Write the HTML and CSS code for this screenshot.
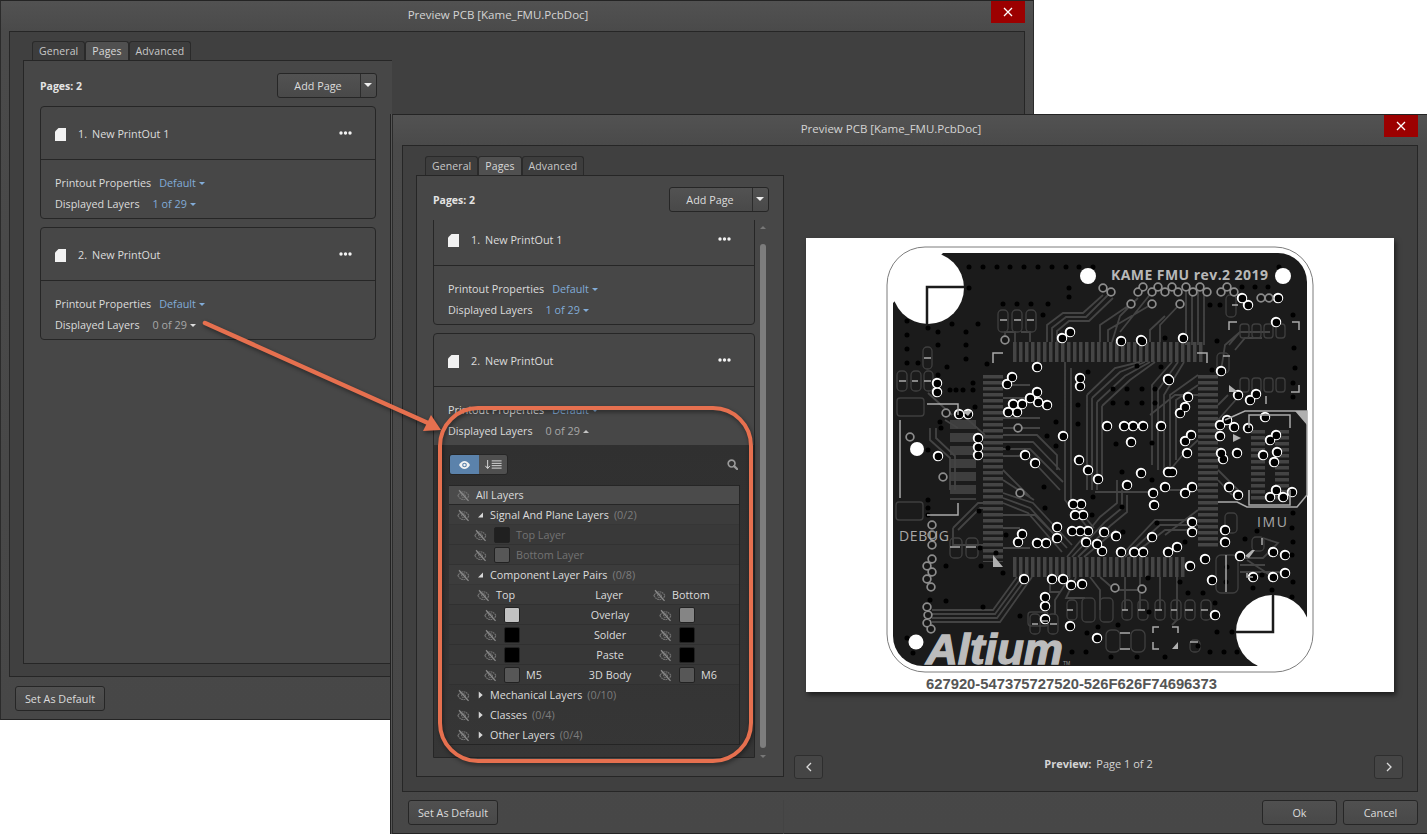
FILE: index.html
```html
<!DOCTYPE html>
<html lang="en">
<head>
<meta charset="utf-8">
<title>Preview PCB</title>
<link rel="stylesheet" href="styles.css">
</head>
<body>
<svg class="sprites" aria-hidden="true">
  <symbol id="eye-off" viewBox="0 0 14 14">
    <path class="i-line" d="M1 7.2C3 4 5 3 7 3s4 1 6 4.2C11 10.4 9 11.4 7 11.4S3 10.4 1 7.2Z"/>
    <circle class="i-line" cx="7" cy="7.2" r="2"/>
    <path class="i-slash" d="M2.2 1.4 12.4 12.8"/>
  </symbol>
  <symbol id="page" viewBox="0 0 11 13"><path class="i-white" d="M3.5 0H11V13H0V3.5Z"/></symbol>
  <symbol id="dots" viewBox="0 0 13 4"><circle class="i-white" cx="2" cy="2" r="1.7"/><circle class="i-white" cx="6.5" cy="2" r="1.7"/><circle class="i-white" cx="11" cy="2" r="1.7"/></symbol>
  <symbol id="tri-open" viewBox="0 0 7 7"><path class="i-soft" d="M6 1V6H1Z"/></symbol>
  <symbol id="tri-shut" viewBox="0 0 7 9"><path class="i-soft" d="M1.5 .5 6 4.5 1.5 8.5Z"/></symbol>
  <symbol id="x" viewBox="0 0 10 10"><path class="i-x" d="M1 1 9 9M9 1 1 9"/></symbol>
</svg>

<section class="window win-back">
  <header class="titlebar"><span>Preview PCB [Kame_FMU.PcbDoc]</span><button class="close"><svg class="ic-x"><use href="#x"/></svg></button></header>
  <div class="frame frame-back">
    <div class="left left-back">
      <nav class="tabs"><span class="tab">General</span><span class="tab on">Pages</span><span class="tab">Advanced</span></nav>
      <div class="panel panel-back">
        <div class="panel-head">
          <strong>Pages: 2</strong>
          <div class="split"><span class="split-main">Add Page</span><span class="split-caret"></span></div>
        </div>
        <div class="cards cards-back">
          <article class="card">
            <div class="card-head"><svg class="ic-page"><use href="#page"/></svg><span class="num">1.</span><span>New PrintOut 1</span><svg class="ic-dots"><use href="#dots"/></svg></div>
            <div class="card-body">
              <div class="prop"><span>Printout Properties</span><a class="val v1">Default<i class="car"></i></a></div>
              <div class="prop"><span>Displayed Layers</span><a class="val v2">1 of 29<i class="car"></i></a></div>
            </div>
          </article>
          <article class="card">
            <div class="card-head"><svg class="ic-page"><use href="#page"/></svg><span class="num">2.</span><span>New PrintOut</span><svg class="ic-dots"><use href="#dots"/></svg></div>
            <div class="card-body">
              <div class="prop"><span>Printout Properties</span><a class="val v1">Default<i class="car"></i></a></div>
              <div class="prop"><span>Displayed Layers</span><a class="val v2 grey">0 of 29<i class="car white"></i></a></div>
            </div>
          </article>
        </div>
      </div>
    </div>
  </div>
  <footer class="foot foot-back"><button class="btn btn-set">Set As Default</button></footer>
</section>

<section class="window win-front">
  <header class="titlebar"><span>Preview PCB [Kame_FMU.PcbDoc]</span><button class="close"><svg class="ic-x"><use href="#x"/></svg></button></header>
  <div class="frame">
    <div class="left">
      <nav class="tabs"><span class="tab">General</span><span class="tab on">Pages</span><span class="tab">Advanced</span></nav>
      <div class="panel">
        <div class="panel-head panel-head-front">
          <strong>Pages: 2</strong>
          <div class="split"><span class="split-main">Add Page</span><span class="split-caret"></span></div>
        </div>
        <div class="scroller">
          <div class="cards">
            <article class="card card-clipped">
              <div class="card-head"><svg class="ic-page"><use href="#page"/></svg><span class="num">1.</span><span>New PrintOut 1</span><svg class="ic-dots"><use href="#dots"/></svg></div>
              <div class="card-body">
                <div class="prop"><span>Printout Properties</span><a class="val v1">Default<i class="car"></i></a></div>
                <div class="prop"><span>Displayed Layers</span><a class="val v2">1 of 29<i class="car"></i></a></div>
              </div>
            </article>
            <article class="card card-open">
              <div class="card-head"><svg class="ic-page"><use href="#page"/></svg><span class="num">2.</span><span>New PrintOut</span><svg class="ic-dots"><use href="#dots"/></svg></div>
              <div class="card-body">
                <div class="prop"><span>Printout Properties</span><a class="val v1">Default<i class="car"></i></a></div>
                <div class="prop"><span>Displayed Layers</span><a class="val v2 grey">0 of 29<i class="car up"></i></a></div>
              </div>
              <div class="layers">
                <div class="toolbar">
                  <div class="seg">
                    <span class="seg-on"><svg class="ic-eye" viewBox="0 0 14 10"><path class="i-white" d="M0 5C2 1.7 4.5 0 7 0s5 1.7 7 5c-2 3.3-4.500 5-7 5S2 8.300 0 5Z"/><circle class="i-blue" cx="7" cy="5" r="3"/><circle class="i-white" cx="7" cy="5" r="1.500"/></svg></span>
                    <span class="seg-off"><svg class="ic-sort" viewBox="0 0 20 10"><path class="i-stroke" d="M3.500 0V9M1 6.500 3.500 9.500 6 6.500M8 1H19M8 3.700H19M8 6.300H19M8 9H19"/></svg></span>
                  </div>
                  <svg class="ic-search" viewBox="0 0 12 12"><circle class="i-search" cx="5" cy="5" r="3.700"/><path class="i-search-h" d="M7.800 7.800 11 11"/></svg>
                </div>
                <div class="tree">
                  <div class="row row-all"><svg class="eo"><use href="#eye-off"/></svg><span class="lab">All Layers</span></div>
                  <div class="row row-grp"><svg class="eo"><use href="#eye-off"/></svg><svg class="tri"><use href="#tri-open"/></svg><span class="lab">Signal And Plane Layers</span><span class="cnt">(0/2)</span></div>
                  <div class="row row-sub"><svg class="eo"><use href="#eye-off"/></svg><i class="sw sw-top"></i><span class="dim">Top Layer</span></div>
                  <div class="row row-sub"><svg class="eo"><use href="#eye-off"/></svg><i class="sw sw-mid"></i><span class="dim">Bottom Layer</span></div>
                  <div class="row row-grp"><svg class="eo"><use href="#eye-off"/></svg><svg class="tri"><use href="#tri-open"/></svg><span class="lab">Component Layer Pairs</span><span class="cnt">(0/8)</span></div>
                  <div class="pair pair-head">
                    <div class="side"><svg class="eo"><use href="#eye-off"/></svg><span class="lab">Top</span></div>
                    <div class="mid">Layer</div>
                    <div class="side"><svg class="eo"><use href="#eye-off"/></svg><span class="lab">Bottom</span></div>
                  </div>
                  <div class="pair">
                    <div class="side"><svg class="eo"><use href="#eye-off"/></svg><i class="sw sw-light"></i></div>
                    <div class="mid">Overlay</div>
                    <div class="side"><svg class="eo"><use href="#eye-off"/></svg><i class="sw sw-grey"></i></div>
                  </div>
                  <div class="pair">
                    <div class="side"><svg class="eo"><use href="#eye-off"/></svg><i class="sw sw-black"></i></div>
                    <div class="mid">Solder</div>
                    <div class="side"><svg class="eo"><use href="#eye-off"/></svg><i class="sw sw-black"></i></div>
                  </div>
                  <div class="pair">
                    <div class="side"><svg class="eo"><use href="#eye-off"/></svg><i class="sw sw-black"></i></div>
                    <div class="mid">Paste</div>
                    <div class="side"><svg class="eo"><use href="#eye-off"/></svg><i class="sw sw-black"></i></div>
                  </div>
                  <div class="pair">
                    <div class="side"><svg class="eo"><use href="#eye-off"/></svg><i class="sw sw-mid"></i><span class="lab">M5</span></div>
                    <div class="mid">3D Body</div>
                    <div class="side"><svg class="eo"><use href="#eye-off"/></svg><i class="sw sw-mid"></i><span class="lab">M6</span></div>
                  </div>
                  <div class="row row-end"><svg class="eo"><use href="#eye-off"/></svg><svg class="tri"><use href="#tri-shut"/></svg><span class="lab">Mechanical Layers</span><span class="cnt">(0/10)</span></div>
                  <div class="row row-end"><svg class="eo"><use href="#eye-off"/></svg><svg class="tri"><use href="#tri-shut"/></svg><span class="lab">Classes</span><span class="cnt">(0/4)</span></div>
                  <div class="row row-end"><svg class="eo"><use href="#eye-off"/></svg><svg class="tri"><use href="#tri-shut"/></svg><span class="lab">Other Layers</span><span class="cnt">(0/4)</span></div>
                </div>
              </div>
            </article>
          </div>
          <div class="scrollbar"><i class="sb-up"></i><i class="sb-thumb"></i><i class="sb-down"></i></div>
        </div>
      </div>
    </div>

    <div class="preview">
      <div class="paper">
        <svg class="pcb" viewBox="806 238 588 454">
          <defs>
            <path id="vias" d="M1070 332h0M1062 338h0M1121 341h0M1142 341h0M1037 367h0M1012 377h0M1007 384h0M1080 378h0M1080 386h0M1168 379h0M1037 392h0M1030 398h0M1038 402h0M1047 405h0M1013 404h0M1022 404h0M1008 412h0M1017 412h0M959 414h0M968 414h0M1063 436h0M1107 426h0M1124 426h0M1133 426h0M1143 426h0M1161 426h0M1131 442h0M938 456h0M978 438h0M978 447h0M978 455h0M937 383h0M937 392h0M1025 455h0M1035 463h0M1079 460h0M1088 470h0M1098 479h0M1141 473h0M1168 472h0M1127 485h0M1165 487h0M1153 493h0M1154 505h0M1073 504h0M1081 504h0M1075 515h0M1083 515h0M1057 527h0M1072 531h0M1080 531h0M1088 531h0M1104 532h0M1116 536h0M1152 537h0M1022 534h0M1018 542h0M1037 543h0M1046 543h0M1057 538h0M1086 542h0M1097 544h0M1102 551h0M1121 552h0M1134 552h0M1143 552h0M1168 552h0M1024 579h0M1052 579h0M1063 579h0M1071 585h0M1082 584h0M1045 597h0M1045 606h0M1045 619h0M1070 626h0M1097 638h0M1242 298h0M1248 305h0M1278 298h0M1141 340h0M1183 338h0M1276 322h0M1221 371h0M1169 380h0M1238 395h0M1250 400h0M1256 394h0M1188 397h0M1185 407h0M1180 413h0M1227 420h0M1220 425h0M1234 427h0M1220 436h0M1248 428h0M1265 417h0M1191 435h0M1185 441h0M1187 453h0M1276 435h0M1270 440h0M1277 452h0M1263 455h0M1221 453h0M1237 453h0M1223 459h0M1274 462h0M1172 472h0M1192 487h0M1185 493h0M1229 487h0M1238 495h0M1270 497h0M1283 497h0M1276 490h0M1292 492h0M1192 522h0M1192 532h0M1225 530h0M1225 542h0M1177 547h0M1190 566h0M1205 559h0M1212 580h0M1240 556h0M1273 552h0M1285 555h0M1285 573h0M1273 577h0M1253 577h0M1215 615h0"/>
            <path id="gvias" d="M1103 288h0M1111 292h0M1143 287h0M1138 292h0M1152 292h0M1158 287h0M1165 292h0M1131 304h0M1152 304h0M1180 304h0M1172 287h0M1178 292h0M1186 287h0M1193 292h0M1200 287h0M1207 292h0M1221 292h0M1227 287h0M1234 292h0M1261 298h0M1269 298h0M1005 340h0M946 413h0M1018 428h0M910 437h0M1020 493h0M943 477h0M1115 588h0M1142 589h0M932 525h0M932 535h0M932 545h0M932 559h0M927 566h0M932 572h0M927 579h0M931 587h0M927 607h0M928 615h0M927 623h0M931 629h0"/>
          </defs>

          <rect class="outline" x="887" y="247" width="426" height="425" rx="38"/>
          <path class="board" d="M943 253H1278A29 29 0 0 1 1307 282V620L1257 666H923A30 30 0 0 1 893 636V303Z"/>

          <g class="comb">
            <path d="M1013 352H1205"/>
            <path d="M993 375V562"/>
            <path d="M1208 375V548"/>
            <path d="M1013 567H1186"/>
          </g>
          <g class="comb-pad">
            <path d="M963 420V500"/>
          </g>
          <g class="comb-thin">
            <path d="M1258 430V500"/>
            <path d="M1282 430V500"/>
          </g>
          <g class="tr">
            <path d="M1005 340V332H1015V342M1047 342V325L1063 313H1083L1103 295M1052 342V328L1066 317H1086L1111 292M1057 342V331L1069 321H1089L1113 298M1100 342V325L1131 304M1108 342V330L1152 304M1112 342 1120 316 1138 298M1120 332 1152 292M1160 342V325L1180 304M1186 345V290M1192 345V290M1198 345V290M1204 345V295M1030 342V332H1021M1150 342V330L1165 316"/>
            <path d="M1065 362V500L1088 528M1071 368V500L1094 528M1087 395V490M1092 398V490M1097 402V490M1102 406V480M1087 395 1115 368 1140 362M1092 398 1120 372 1145 362M1097 402 1125 376 1150 362M1102 406 1130 380 1155 362M1172 362 1152 385V465M1178 362 1158 390V470M1184 362 1164 395V470"/>
            <path d="M1003 385H1030M1003 398H1035M1003 418H1040M1003 428H1040M1003 435H1037L1057 455V470M1003 442H1033L1060 470M1003 449H1030L1063 482M1003 456H1028L1060 490M1003 470 1030 497M1003 480 1034 500M1003 493 1033 503 1072 545M1003 498 1030 508 1067 548M1003 503 1028 513 1062 552M1000 515H1035L1055 535M1003 528H1020M1003 548H1030"/>
            <path d="M1067 557 1100 517 1117 503V480M1072 557 1105 522 1122 508V490M1078 557 1110 526 1127 512V495M1084 557 1116 530M1120 557 1155 520H1198M1125 557 1160 525H1198M1130 557 1165 530H1198M1198 395H1175L1150 415M1198 490H1160M1153 492H1095M1198 375 1170 395V470M1198 385 1176 400V460M1198 440 1185 452 1170 470M1198 510 1165 535"/>
            <path d="M1017 577 993 610H932M1022 577 995 614H932M1027 577 997 618H932M1032 577 1000 622H932M1050 577V592H1060M1090 577 1100 590V610M1100 577 1115 590H1140M1125 577V610M1140 577V610M1160 577V610M1177 577V620L1172 625M1070 577 1055 600V615M1076 577 1066 598H1085"/>
            <path d="M953 528 978 503H983M953 528V545H995M958 530 980 508H985M928 393 952 415M930 428V440L950 458V490M936 428V438L955 456V490M966 418 985 435M945 420 958 428"/>
            <path d="M1240 558H1263L1278 543 1263 538M1240 565H1265M1240 572H1285M1247 560 1270 575M1229 345 1240 332H1270M1235 350 1245 338H1262M1221 371 1225 345 1240 332M1218 420 1240 395M1218 405 1228 395M1218 470 1240 492M1218 480 1232 495"/>
          </g>
          <g class="pad">
            <rect x="998" y="310" width="10" height="22" rx="4"/><rect x="1012" y="310" width="10" height="22" rx="4"/><rect x="1026" y="310" width="10" height="22" rx="4"/>
            <rect x="923" y="347" width="9" height="22" rx="4"/>
            <rect x="897" y="371" width="10" height="20" rx="4"/><rect x="911" y="371" width="10" height="20" rx="4"/><rect x="924" y="371" width="9" height="20" rx="4"/>
            <rect x="897" y="398" width="27" height="18" rx="3"/>
            <rect x="896" y="502" width="27" height="18" rx="3"/>
            <rect x="950" y="538" width="12" height="20" rx="4"/><rect x="966" y="538" width="12" height="20" rx="4"/>
            <rect x="1030" y="614" width="10" height="20" rx="4"/><rect x="1048" y="614" width="10" height="20" rx="4"/><rect x="1028" y="612" width="20" height="14" rx="3"/>
            <rect x="1067" y="600" width="10" height="20" rx="4"/><rect x="1082" y="598" width="13" height="24" rx="4"/><rect x="1100" y="598" width="13" height="24" rx="4"/>
            <rect x="1122" y="600" width="10" height="20" rx="4"/><rect x="1138" y="600" width="10" height="20" rx="4"/><rect x="1155" y="600" width="10" height="20" rx="4"/><rect x="1171" y="600" width="10" height="20" rx="4"/><rect x="1185" y="600" width="10" height="20" rx="4"/><rect x="1201" y="600" width="10" height="20" rx="4"/>
            <rect x="1106" y="630" width="14" height="22" rx="5"/><rect x="1131" y="630" width="14" height="22" rx="5"/>
            <rect x="1190" y="640" width="10" height="12" rx="4"/>
            <rect x="1226" y="295" width="10" height="22" rx="4"/>
            <rect x="1240" y="324" width="9" height="14" rx="3"/><rect x="1252" y="324" width="9" height="14" rx="3"/><rect x="1264" y="324" width="9" height="14" rx="3"/><rect x="1276" y="324" width="9" height="14" rx="3"/>
            <rect x="1240" y="378" width="9" height="14" rx="3"/><rect x="1252" y="378" width="9" height="14" rx="3"/><rect x="1264" y="378" width="9" height="14" rx="3"/><rect x="1276" y="378" width="9" height="14" rx="3"/>
            <rect x="1217" y="353" width="12" height="20" rx="4"/>
            <rect x="1225" y="513" width="12" height="20" rx="4"/>
            <rect x="1252" y="537" width="12" height="14" rx="4"/>
            <rect x="1216" y="555" width="22" height="38" rx="5"/>
          </g>

          <use href="#vias" class="v-white"/>
          <use href="#vias" class="v-hole" transform="translate(.4 .4)"/>
          <use href="#gvias" class="v-grey"/>
          <use href="#gvias" class="v-hole-s"/>
          <path class="dots" d="M969 267h0M983 267h0M997 267h0M1010 267h0M1024 267h0M1038 267h0M1052 267h0M1066 267h0M1079 267h0M1093 267h0M969 288h0M1069 288h0M1069 297h0M1003 304h0M1017 304h0M1031 304h0M1048 304h0M1043 315h0M907 321h0M928 328h0M938 332h0M952 324h0M966 332h0M978 324h0M907 335h0M907 349h0M938 345h0M966 345h0M966 359h0M947 367h0M987 364h0M907 363h0M918 363h0M938 375h0M950 390h0M956 390h0M963 390h0M973 390h0M973 383h0M975 407h0M940 422h0M941 428h0M928 450h0M1056 422h0M1078 405h0M1078 424h0M1088 372h0M1137 366h0M1161 367h0M1113 389h0M1127 389h0M1142 389h0M1155 389h0M1113 403h0M1127 403h0M1142 403h0M1155 403h0M1116 444h0M1152 443h0M1047 436h0M1056 446h0M1008 448h0M928 500h0M928 508h0M928 515h0M979 511h0M1006 535h0M980 548h0M996 553h0M946 566h0M981 566h0M1003 573h0M930 600h0M946 601h0M983 607h0M1020 616h0M1044 487h0M1045 508h0M1093 497h0M1122 472h0M1122 507h0M1152 480h0M1157 523h0M1123 532h0M1092 515h0M913 653h0M907 638h0M1072 652h0M1086 652h0M1111 657h0M1137 657h0M1165 657h0M1087 633h0M1098 627h0M1118 625h0M1149 612h0M1293 315h0M1294 348h0M1295 368h0M1293 383h0M1293 397h0M1210 305h0M1220 305h0M1255 287h0M1268 287h0M1279 267h0M1242 287h0M1217 341h0M1212 370h0M1165 338h0M1293 513h0M1292 528h0M1293 542h0M1292 555h0M1293 582h0M1292 597h0M1272 590h0M1253 588h0M1217 632h0M1232 632h0M1210 652h0M1224 652h0M1237 652h0M1198 646h0M1215 603h0M1188 593h0M1203 593h0M1180 582h0M1148 578h0M1185 542h0M1257 531h0M1245 539h0M1227 567h0M1226 582h0M1262 575h0"/>

          <g class="silk">
            <path d="M993 363V353H1003M1197 353H1207V363M927 404H958V415M900 420V498M927 515H958V503M1000 320H1007M1014 320H1021M1027 320H1034M924 358H931M899 381H906M912 381H918M924 381H931M1067 610H1073M1032 624H1038M1050 624H1057M1042 621H1048M1122 610H1128M1138 610H1145M1155 610H1162M1171 610H1177M1185 610H1193M1201 610H1208M1153 633V627H1159M1172 627H1178V633M1153 642V649H1159M1120 633H1130M1120 649H1130M1229 330V322H1237M1292 322H1299V330M1291 392H1299V385M1226 555V592M1247 573V577H1253M1232 305H1238M1223 356H1230M1262 538V545M950 547H960M966 547H976M1266 396V404M1190 642H1198"/>
            <path d="M1225 420 1245 411H1307V495L1297 507H1247L1237 502H1218M1249 428V415H1290V428M1249 490V505H1290V490"/>
          </g>
          <path class="silk-fill" d="M993 555V567H1003ZM1229 385V392H1238ZM1295 411H1307V425ZM1172 649H1178V642ZM1245 556 1252 550H1255L1249 558ZM1233 434 1241 438 1233 442ZM962 411H972L968 416Z"/>

          <circle class="hole" cx="928" cy="288" r="36"/>
          <circle class="hole" cx="1273" cy="632" r="37"/>
          <circle class="hole" cx="1088" cy="276" r="8"/>
          <circle class="hole" cx="1283" cy="276" r="8"/>
          <circle class="hole" cx="916" cy="642" r="7.500"/>
          <circle class="hole" cx="917" cy="449" r="7"/>
          <path class="cross" d="M964 287H927V324M1273 595V632H1236"/>

          <text class="t-kame" x="1111" y="280" textLength="157">KAME FMU rev.2 2019</text>
          <text class="t-debug" x="899" y="541" textLength="50">DEBUG</text>
          <text class="t-imu" x="1257" y="527" textLength="30">IMU</text>
          <text class="t-altium" x="926" y="664" textLength="137" lengthAdjust="spacingAndGlyphs">Altium</text>
          <text class="t-tm" x="1063" y="665">TM</text>
          <text class="t-code" x="926" y="689" textLength="291" lengthAdjust="spacingAndGlyphs">627920-547375727520-526F626F74696373</text>
        </svg>
      </div>
      <div class="pager">
        <button class="nav"><svg viewBox="0 0 6 10"><path class="i-chev" d="M5 1 1 5l4 4"/></svg></button>
        <div class="pager-text"><b>Preview:</b><span>Page 1 of 2</span></div>
        <button class="nav"><svg viewBox="0 0 6 10"><path class="i-chev" d="M1 1l4 4-4 4"/></svg></button>
      </div>
    </div>
  </div>
  <footer class="foot">
    <div class="foot-left"><button class="btn btn-set">Set As Default</button></div>
    <button class="btn btn-act">Ok</button>
    <button class="btn btn-act">Cancel</button>
  </footer>
</section>

<svg class="callout" viewBox="0 0 1427 834" aria-hidden="true">
  <g class="callout-g">
    <rect class="ring" x="440" y="408" width="311" height="353" rx="38"/>
    <path class="arrow-line" d="M205 323 428 423"/>
    <path class="arrow-head" d="M441 430 423 431 431 415Z"/>
  </g>
</svg>
</body>
</html>
```
FILE: styles.css
```css
* { box-sizing: border-box; }
html, body { margin: 0; padding: 0; }
body {
  width: 1427px; height: 834px; overflow: hidden; position: relative; background: #fff;
  font: 10.800px/1.2 "Open Sans", "Noto Sans", sans-serif; color: #dcdcdc;
}
button { font: inherit; color: inherit; }
.sprites { position: absolute; width: 0; height: 0; }

/* icon paints */
.i-line { fill: none; stroke: #747474; stroke-width: 1.2; stroke-dasharray: 2 .6; }
.i-slash { fill: none; stroke: #8a8a8a; stroke-width: 1.4; }
.i-white { fill: #f2f2f2; }
.i-soft { fill: #d8d8d8; }
.i-blue { fill: #5b82ab; }
.i-stroke { fill: none; stroke: #e6e6e6; stroke-width: 1; }
.i-search { fill: none; stroke: #9a9a9a; stroke-width: 1.800; }
.i-search-h { fill: none; stroke: #9a9a9a; stroke-width: 2.400; stroke-linecap: round; }
.i-chev { fill: none; stroke: #dcdcdc; stroke-width: 1.300; }
.i-x { fill: none; stroke: #fff; stroke-width: 1.300; }

/* windows */
.window {
  position: absolute; display: flex; flex-direction: column;
  background: linear-gradient(#525252, #4a4a4a 30px, #474747);
  border-top: 1px solid #242424; border-left: 1px solid #2b2b2b; border-bottom: 1px solid #242424;
}
.win-back { left: 0; top: 0; width: 1034px; height: 720px; border-right: 1px solid #2b2b2b; }
.win-front { left: 392px; top: 114px; width: 1035px; height: 720px; box-shadow: -1px 0 0 #555, -2px 0 0 #222; }

.titlebar {
  height: 30px; flex: none; display: flex; align-items: center; justify-content: center;
  position: relative; font-size: 11.500px; color: #d4d4d4; padding: 0 38px 2px 0;
}
.close {
  position: absolute; right: 9px; top: 0; width: 34px; height: 22px; border: 0; padding: 0;
  background: #9c0000; display: flex; align-items: center; justify-content: center;
}
.win-back .close { right: 8px; }
.ic-x { width: 10px; height: 10px; }

.frame {
  height: 647px; flex: none; margin: 0 9px 0 9px; display: flex;
  background: #404040; border: 1px solid #262626;
}
.frame-back { height: 646px; margin: 0 8px 0 8px; }

.left { width: 381px; flex: none; display: flex; flex-direction: column; padding: 10px 0 14px 13px; }
.left-back { width: 382px; padding: 9px 0 12px 13px; }

.tabs { display: flex; height: 19px; margin-left: 9px; flex: none; }
.tab {
  padding: 0 6px; display: flex; align-items: center; background: #3d3d3d; color: #c8c8c8;
  border: 1px solid #2a2a2a; border-bottom: 0; border-radius: 3px 3px 0 0; font-size: 10.500px; letter-spacing: .1px;
}
.tab.on { background: #505050; color: #d8d8d8; }

.panel {
  flex: 1; display: flex; flex-direction: column; min-height: 0; background: #474747;
  border: 1px solid #262626; padding: 0 0 0 16px;
}
.panel-back { border-right: 0; }
.panel-head {
  flex: none; height: 45px; padding: 12px 15px 0 0; display: flex; justify-content: space-between; align-items: flex-start;
}
.panel-head-front { height: 44px; padding: 11px 14px 0 0; }
.panel-head strong { font-weight: 700; font-size: 10.500px; color: #e4e4e4; line-height: 27px; }
.split {
  width: 100px; height: 25px; display: flex; border: 1px solid #262626; border-radius: 3px;
  background: linear-gradient(#525252, #494949);
}
.split-main { flex: 1; display: flex; align-items: center; justify-content: center; border-right: 1px solid #2c2c2c; padding: 2px 2px 0 0; }
.split-caret { width: 15px; position: relative; }
.split-caret::after {
  content: ""; position: absolute; left: 3px; top: 9px;
  border: 4px solid transparent; border-top: 4px solid #eee; border-bottom: 0;
}

.scroller { flex: 1; display: flex; min-height: 0; overflow: hidden; }
.cards { width: 322px; flex: none; display: flex; flex-direction: column; gap: 8px; }
.cards-back { width: 336px; }
.card { border: 1px solid #262626; border-radius: 4px; background: #474747; flex: none; }
.card-clipped { margin-top: -8px; }
.card-head {
  height: 53px; display: flex; align-items: center; padding: 2px 14px 0; border-bottom: 1px solid #262626; color: #dcdcdc;
}
.ic-page { width: 11px; height: 13px; flex: none; margin-right: 12px; }
.num { margin-right: 5px; }
.ic-dots { width: 13px; height: 4px; margin-left: auto; margin-top: -2px; margin-right: 9px; }
.card-body { padding: 13px 14px 3px; }
.prop { height: 21px; display: flex; align-items: center; }
.val { color: #82acd8; display: inline-flex; align-items: center; }
.v1 { margin-left: 8px; }
.v2 { margin-left: 13px; }
.grey { color: #a8a8a8; }
.car { width: 0; height: 0; margin-left: 3px; border: 3px solid transparent; border-top: 3.500px solid #82acd8; border-bottom: 0; }
.car.white { border-top-color: #ddd; }
.car.up { border-top: 0; border-bottom: 3.500px solid #c4c4c4; }

/* layer tree */
.card-open { border-radius: 4px 4px 0 0; }
.layers { background: linear-gradient(#303030, #363636); padding: 9px 14px 12px 15px; height: 312px; }
.toolbar { display: flex; justify-content: space-between; align-items: center; height: 21px; margin-bottom: 10px; padding-right: 2px; }
.seg { display: flex; height: 21px; border: 1px solid #262626; border-radius: 3px; overflow: hidden; }
.seg-on { width: 29px; background: #5b82ab; display: flex; align-items: center; justify-content: center; }
.seg-off { width: 28px; background: #4f4f4f; display: flex; align-items: center; justify-content: center; }
.ic-eye { width: 11px; height: 8px; }
.ic-sort { width: 19px; height: 9px; }
.ic-search { width: 11px; height: 11px; }
.tree { height: 260px; border-right: 1px solid #242424; border-bottom: 1px solid #242424; }
.row, .pair { height: 20px; display: flex; align-items: center; white-space: nowrap; }
.row-all { background: #4b4b4b; border: 1px solid #262626; border-width: 1px 0; padding-left: 8px; }
.row-grp { background: #3c3c3c; padding: 1px 0 0 8px; border-bottom: 1px solid #363636; }
.row-sub { background: #393939; padding: 1px 0 0 25px; border-bottom: 1px solid #323232; }
.row-end { padding-left: 8px; }
.eo { width: 13px; height: 13px; flex: none; }
.tri { width: 7px; height: 8px; flex: none; margin: 0 6px 0 7px; }
.row-all .lab { margin-left: 6px; }
.row-sub .sw { margin: 0 6px 0 7px; }
.cnt { color: #7c7c7c; margin-left: 5px; }
.dim { color: #737373; }
.sw { width: 16px; height: 16px; flex: none; border: 1px solid #222; border-radius: 2px; display: block; }
.sw-top { background: #202020; }
.sw-mid { background: #575757; }
.sw-light { background: #c2c2c2; }
.sw-grey { background: #858585; }
.sw-black { background: #000; }
.pair { background: #373737; padding-top: 1px; border-bottom: 1px solid #303030; display: grid; grid-template-columns: 113px 96px 1fr; }
.side { display: flex; align-items: center; padding-left: 35px; }
.side + .mid + .side { padding-left: 1px; }
.side .sw { margin-left: 7px; }
.side .lab { margin-left: 6px; }
.mid { text-align: center; }
.pair-head { background: #3a3a3a; }
.pair-head .side { padding-left: 28px; }
.pair-head .side + .mid + .side { padding-left: 0; margin-left: -5px; }
.pair-head .mid { padding-right: 2px; }

.scrollbar { width: 7px; margin-left: 4px; display: flex; flex-direction: column; align-items: center; padding-top: 6px; flex: none; }
.sb-up, .sb-down { width: 0; height: 0; border: 3px solid transparent; flex: none; }
.sb-up { border-top: 0; border-bottom: 3px solid #777; margin-bottom: 15px; }
.sb-down { border-bottom: 0; border-top: 3px solid #777; margin-top: 7px; }
.sb-thumb { width: 6px; height: 504px; background: #7d7d7d; border-radius: 3px; flex: none; }

/* preview */
.preview { flex: 1; height: 631px; padding: 92px 22px 0 22px; display: flex; flex-direction: column; }
.paper { width: 588px; height: 454px; background: #fff; box-shadow: 2px 3px 5px rgba(0,0,0,.55); flex: none; }
.pcb { width: 588px; height: 454px; display: block; }
.pager { flex: none; margin: 63px -8px 0 -12px; display: flex; justify-content: space-between; align-items: center; }
.nav { width: 29px; height: 24px; background: #454545; border: 1px solid #2e2e2e; border-radius: 3px; display: flex; align-items: center; justify-content: center; padding: 0; }
.nav svg { width: 6px; height: 10px; }
.pager-text { display: flex; gap: 5px; color: #d4d4d4; font-size: 11px; padding-bottom: 6px; }
.pager-text b { font-weight: 700; }

/* footer */
.foot { flex: 1; display: flex; align-items: flex-start; gap: 6px; padding: 8px 9px 0 0; }
.foot-back { padding: 9px 0 0 14px; }
.foot-left { width: 391px; height: 41px; padding-left: 15px; margin-right: auto; border-right: 1px solid #434343; }
.btn { height: 25px; border: 1px solid #262626; border-radius: 3px; background: linear-gradient(#505050, #484848); padding: 2px 0 0; }
.btn-set { width: 90px; }
.btn-act { width: 75px; }

/* pcb */
.outline { fill: #fff; stroke: #7d7d7d; stroke-width: 1; }
.board { fill: #1b1b1b; }
.comb path { fill: none; stroke: #454545; stroke-width: 20; stroke-dasharray: 3.500 2.500; }
.comb-pad path { fill: none; stroke: #3e3e3e; stroke-width: 26; stroke-dasharray: 9 4; }
.comb-thin path { fill: none; stroke: #444; stroke-width: 14; stroke-dasharray: 3.500 2.500; }
.tr path { fill: none; stroke: #444; stroke-width: 1.800; }
.pad rect { fill: none; stroke: #3f3f3f; stroke-width: 1.300; }
.v-white { fill: none; stroke: #fff; stroke-width: 10.500; stroke-linecap: round; }
.v-hole { fill: none; stroke: #000; stroke-width: 7.500; stroke-linecap: round; }
.v-grey { fill: none; stroke: #8c8c8c; stroke-width: 9.500; stroke-linecap: round; }
.v-hole-s { fill: none; stroke: #151515; stroke-width: 6; stroke-linecap: round; }
.dots { fill: none; stroke: #000; stroke-width: 5; stroke-linecap: round; }
.silk path { fill: none; stroke: #ababab; stroke-width: 1.500; }
.silk-fill { fill: #b0b0b0; }
.hole { fill: #fff; }
.cross { fill: none; stroke: #1b1b1b; stroke-width: 2.500; }
.t-kame { font: 700 14px "Open Sans", sans-serif; fill: #b8b8b8; }
.t-debug { font: 400 14px "Open Sans", sans-serif; fill: #a8a8a8; }
.t-imu { font: 400 14px "Open Sans", sans-serif; fill: #a8a8a8; }
.t-altium { font: italic 700 42px "Liberation Sans", sans-serif; fill: #bcbcbc; stroke: #bcbcbc; stroke-width: 1.300; }
.t-tm { font: 400 5px "Liberation Sans", sans-serif; fill: #999; }
.t-code { font: 700 14px "Liberation Sans", sans-serif; fill: #555; }

/* callout */
.callout { position: absolute; left: 0; top: 0; width: 1427px; height: 834px; pointer-events: none; }
.callout-g { filter: drop-shadow(1px 2px 2px rgba(0,0,0,.45)); }
.ring { fill: none; stroke: #e6704f; stroke-width: 4; }
.arrow-line { fill: none; stroke: #e6704f; stroke-width: 4.500; stroke-linecap: round; }
.arrow-head { fill: #e6704f; }
```
